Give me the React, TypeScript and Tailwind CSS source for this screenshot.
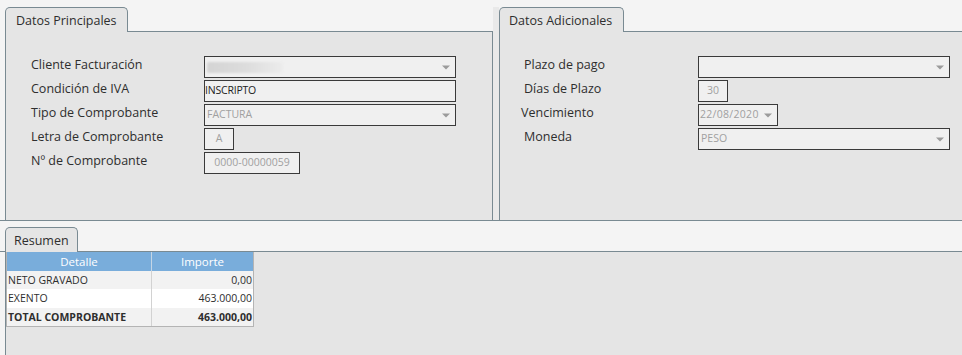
import React from "react";

const B = "border-[#798a92]";

function Arrow() {
  return (
    <svg width="8" height="5" viewBox="0 0 8 5" className="shrink-0">
      <path d="M0 0.5H8L4 4.5Z" fill="#9b9b9b" />
    </svg>
  );
}

function Field({
  w,
  children,
  arrow,
  center,
  className = "",
}: {
  w: string;
  children?: React.ReactNode;
  arrow?: boolean;
  center?: boolean;
  className?: string;
}) {
  return (
    <div
      className={`${w} h-[22px] border border-[#3a3a3a] bg-[#f0f0f0] flex items-center ${
        center ? "justify-center" : ""
      } text-[10.5px] ${className}`}
    >
      <div className={center ? "" : "flex-1 min-w-0"}>{children}</div>
      {arrow && <div className="pr-[5px] flex items-center">{<Arrow />}</div>}
    </div>
  );
}

function Label({ children, className = "" }: { children: React.ReactNode; className?: string }) {
  return (
    <div className={`h-[22px] leading-[18px] text-[12.5px] text-[#2e2e2e] whitespace-nowrap ${className}`}>
      {children}
    </div>
  );
}

function Tab({ children, w, pl }: { children: React.ReactNode; w: string; pl: string }) {
  return (
    <div
      className={`${w} ${pl} h-[25px] -mb-px border border-b-0 ${B} rounded-t-[5px] bg-[#e5e5e5] relative z-10 pt-[4px] leading-[18px] text-[12.5px] text-[#2e2e2e] whitespace-nowrap`}
    >
      {children}
    </div>
  );
}

export default function App() {
  return (
    <div className="w-[962px] h-[355px] bg-[#f4f4f4] overflow-hidden font-['Open_Sans',sans-serif]">
      {/* Top row */}
      <div className={`flex h-[221px] border-b ${B}`}>
        {/* Left panel */}
        <div className="ml-[5px] w-[488px] flex flex-col">
          <div className={`h-[32px] border-b ${B} flex items-end`}>
            <Tab w="w-[123px]" pl="pl-[10px]">Datos Principales</Tab>
          </div>
          <div className={`flex-1 bg-[#e5e5e5] border-l border-r ${B} pt-[24px] pl-[25px]`}>
            <div className="flex flex-col gap-[2px]">
              <div className="flex">
                <Label className="w-[173px]">Cliente Facturación</Label>
                <Field w="w-[252px]" arrow>
                  <div className="ml-[2px] w-[76px] h-[11px] rounded-[2px] bg-gradient-to-r from-[#d4d4d4] via-[#dcdcdc] to-[#ececec] blur-[1px]" />
                </Field>
              </div>
              <div className="flex">
                <Label className="w-[173px]">Condición de IVA</Label>
                <Field w="w-[252px]">
                  <span className="text-[#222] tracking-[-0.2px]">INSCRIPTO</span>
                </Field>
              </div>
              <div className="flex">
                <Label className="w-[173px]">Tipo de Comprobante</Label>
                <Field w="w-[252px]" arrow>
                  <span className="pl-[2px] text-[#a0a0a0]">FACTURA</span>
                </Field>
              </div>
              <div className="flex">
                <Label className="w-[173px]">Letra de Comprobante</Label>
                <Field w="w-[30px]" center>
                  <span className="text-[#a0a0a0]">A</span>
                </Field>
              </div>
              <div className="flex">
                <Label className="w-[173px]">Nº de Comprobante</Label>
                <Field w="w-[96px]" center>
                  <span className="text-[#a0a0a0]">0000-00000059</span>
                </Field>
              </div>
            </div>
          </div>
        </div>

        {/* gap */}
        <div className="w-[6px] mt-[7px] bg-[#e9e9e9]" />

        {/* Right panel */}
        <div className="flex-1 flex flex-col">
          <div className={`h-[32px] border-b ${B} flex items-end`}>
            <Tab w="w-[125px]" pl="pl-[9px]">Datos Adicionales</Tab>
          </div>
          <div className={`flex-1 bg-[#e5e5e5] border-l ${B} pt-[24px] pl-[24px]`}>
            <div className="flex flex-col gap-[2px]">
              <div className="flex">
                <Label className="w-[174px]">Plazo de pago</Label>
                <Field w="w-[252px]" arrow />
              </div>
              <div className="flex">
                <Label className="w-[174px]">Días de Plazo</Label>
                <Field w="w-[30px]" center>
                  <span className="text-[#a0a0a0]">30</span>
                </Field>
              </div>
              <div className="flex">
                <Label className="w-[177px] -ml-[3px]">Vencimiento</Label>
                <Field w="w-[80px]" arrow>
                  <span className="pl-[1px] text-[#a0a0a0] tracking-[0.3px]">22/08/2020</span>
                </Field>
              </div>
              <div className="flex">
                <Label className="w-[174px]">Moneda</Label>
                <Field w="w-[252px]" arrow>
                  <span className="pl-[2px] text-[#a0a0a0]">PESO</span>
                </Field>
              </div>
            </div>
          </div>
        </div>
      </div>

      {/* Resumen */}
      <div className={`h-[31px] border-b ${B} flex items-end pl-[5px]`}>
        <Tab w="w-[73px]" pl="pl-[8px]">Resumen</Tab>
      </div>
      <div className={`ml-[5px] h-[103px] border-l ${B} bg-[#e5e5e5]`}>
        <div className="w-[248px] border-l border-r border-b border-[#b4b4b4] text-[10.5px] text-[#2e2e2e]">
          <div className="flex h-[19px] bg-[#79addb] text-white text-[11.5px] leading-[19px]">
            <div className="w-[145px] text-center border-r border-[#c4d6e6]">Detalle</div>
            <div className="flex-1 text-center">Importe</div>
          </div>
          <div className="flex h-[18px] leading-[18px] bg-[#f2f2f2]">
            <div className="w-[145px] pl-[1px] border-r border-[#d2d2d2]">NETO GRAVADO</div>
            <div className="flex-1 text-right pr-[1px]">0,00</div>
          </div>
          <div className="flex h-[19px] leading-[19px] bg-white">
            <div className="w-[145px] pl-[1px] border-r border-[#d2d2d2]">EXENTO</div>
            <div className="flex-1 text-right pr-[1px]">463.000,00</div>
          </div>
          <div className="flex h-[18px] leading-[18px] bg-[#f2f2f2] font-bold">
            <div className="w-[145px] pl-[1px] border-r border-[#d2d2d2]">TOTAL COMPROBANTE</div>
            <div className="flex-1 text-right pr-[1px]">463.000,00</div>
          </div>
        </div>
      </div>
    </div>
  );
}
